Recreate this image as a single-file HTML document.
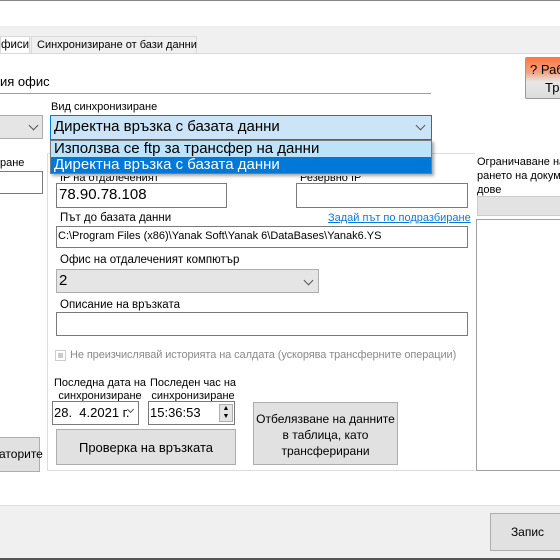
<!DOCTYPE html>
<html><head><meta charset="utf-8"><style>
*{box-sizing:border-box;margin:0;padding:0}
body{width:560px;height:560px;overflow:hidden;background:#fff;position:relative;font-family:"Liberation Sans","Noto Sans CJK JP",sans-serif;font-size:12px;color:#000}
.a{position:absolute;white-space:nowrap}
.tb{position:absolute;background:#fff;border:1px solid #7a7a7a}
.btn{position:absolute;background:#e1e1e1;border:1px solid #adadad;text-align:center;font-size:13px}
.chev{position:absolute;width:7px;height:7px;border-right:1px solid #555;border-bottom:1px solid #555;transform:rotate(45deg)}
</style></head><body>
<div class="a" style="left:0;top:0;width:560px;height:1px;background:#888"></div>
<div class="a" style="left:0;top:26px;width:560px;height:27px;background:#f0f0f0"></div>
<div class="a" style="left:0;top:53px;width:560px;height:1px;background:#d9d9d9"></div>
<div class="a" style="left:0;top:36px;width:30px;height:17px;background:#fff;border:1px solid #d9d9d9;border-bottom:none;font-size:11.5px;padding-top:2px">фиси</div>
<div class="a" style="left:31px;top:36px;width:166px;height:17px;background:#f0f0f0;border:1px solid #d9d9d9;border-bottom:none;font-size:11px;padding:2px 0 0 5px">Синхронизиране от бази данни</div>

<div class="a" style="left:0;top:74px;font-size:13px">ия офис</div>
<div class="a" style="left:0;top:93px;width:431px;height:1px;background:#a0a0a0"></div>

<div class="a" style="left:525px;top:57px;width:40px;height:42px;border:1px solid #999;border-radius:2px;background:linear-gradient(#ff7a45 0%,#f5a080 35%,#e8e8e8 60%,#dcdcdc 100%)"></div>
<div class="a" style="left:530px;top:62px;font-size:13px">? Раб</div>
<div class="a" style="left:545px;top:80px;font-size:13px">Тр</div>

<div class="a" style="left:-2px;top:115px;width:45px;height:24px;background:#e5e5e5;border:1px solid #adadad"></div>
<div class="chev" style="left:30px;top:122px"></div>
<div class="a" style="left:0;top:157px;font-size:11px">ране</div>
<div class="tb" style="left:-2px;top:171px;width:45px;height:23px"></div>
<div class="btn" style="left:-2px;top:437px;width:42px;height:35px;padding-top:9px;font-size:12px">аторите</div>

<div class="a" style="left:47px;top:153px;width:428px;height:318px;border:1px solid #dcdcdc;border-right:none"></div>

<div class="a" style="left:51px;top:101px;font-size:11px">Вид синхронизиране</div>
<div class="a" style="left:50px;top:115px;width:382px;height:25px;background:#cce4f7;border:1px solid #0078d7"></div>
<div class="a" style="left:54px;top:118px;font-size:15px">Директна връзка с базата данни</div>
<div class="chev" style="left:417px;top:122px"></div>
<div class="a" style="left:50px;top:140px;width:382px;height:34px;border:1px solid #7a7a7a;background:#fff;box-shadow:2px 2px 3px rgba(0,0,0,.35)"></div>
<div class="a" style="left:51px;top:141px;width:380px;height:16px;background:#bde3fb"></div>
<div class="a" style="left:51px;top:157px;width:380px;height:16px;background:#0078d7"></div>
<div class="a" style="left:54px;top:140px;font-size:15px">Използва се ftp за трансфер на данни</div>
<div class="a" style="left:54px;top:156px;font-size:15px;color:#fff">Директна връзка с базата данни</div>

<div class="a" style="left:60px;top:172px;font-size:11px;clip-path:inset(4px 0 0 0)">IP на отдалеченият</div>
<div class="tb" style="left:56px;top:183px;width:171px;height:25px"></div>
<div class="a" style="left:59px;top:186px;font-size:15px">78.90.78.108</div>
<div class="a" style="left:300px;top:172px;font-size:11px;clip-path:inset(4px 0 0 0)">Резервно IP</div>
<div class="tb" style="left:296px;top:183px;width:172px;height:25px"></div>

<div class="a" style="left:60px;top:212px;font-size:11.5px">Път до базата данни</div>
<div class="a" style="left:328px;top:212px;font-size:11px;color:#0a7ad8;text-decoration:underline">Задай път по подразбиране</div>
<div class="tb" style="left:56px;top:226px;width:412px;height:22px"></div>
<div class="a" style="left:58px;top:230px;font-size:11px">C:\Program Files (x86)\Yanak Soft\Yanak 6\DataBases\Yanak6.YS</div>

<div class="a" style="left:60px;top:254px;font-size:11.5px">Офис на отдалеченият компютър</div>
<div class="a" style="left:56px;top:269px;width:263px;height:24px;background:#e5e5e5;border:1px solid #adadad"></div>
<div class="a" style="left:59px;top:272px;font-size:15px">2</div>
<div class="chev" style="left:305px;top:277px"></div>

<div class="a" style="left:60px;top:299px;font-size:11.5px">Описание на връзката</div>
<div class="tb" style="left:56px;top:312px;width:412px;height:24px"></div>

<div class="a" style="left:55px;top:350px;width:11px;height:11px;border:1px solid #ccc;background:#fff"><div style="margin:2px;width:5px;height:5px;background:#ccc"></div></div>
<div class="a" style="left:70px;top:349px;font-size:11px;color:#8a8a8a;letter-spacing:-0.1px">Не преизчислявай историята на салдата (ускорява трансферните операции)</div>

<div class="a" style="left:52px;top:377px;width:96px;text-align:center;font-size:11px;line-height:13px">Последна дата на<br>синхронизиране</div>
<div class="a" style="left:148px;top:377px;width:90px;text-align:center;font-size:11px;line-height:13px">Последен час на<br>синхронизиране</div>
<div class="tb" style="left:52px;top:401px;width:87px;height:24px"></div>
<div class="a" style="left:54px;top:405px;font-size:13px">28.&nbsp; 4.2021 г.</div>
<div class="chev" style="left:128px;top:407px;width:5px;height:5px;background:#fff"></div>
<div class="tb" style="left:148px;top:401px;width:87px;height:24px"></div>
<div class="a" style="left:150px;top:405px;font-size:13px">15:36:53</div>
<div class="a" style="left:219px;top:404px;width:14px;height:18px;border:1px solid #adadad;background:#e5e5e5;font-size:7px;line-height:8px;text-align:center">▲<br>▼</div>

<div class="btn" style="left:56px;top:429px;width:180px;height:36px;padding-top:10px">Проверка на връзката</div>
<div class="btn" style="left:253px;top:402px;width:145px;height:63px;padding-top:8px;line-height:16px;font-size:12px">Отбелязване на данните<br>в таблица, като<br>трансферирани</div>

<div class="a" style="left:477px;top:155px;font-size:11px;line-height:14px">Ограничаване на<br>рането на докум<br>дове</div>
<div class="a" style="left:477px;top:196px;width:90px;height:20px;background:#e3e3e3;border:1px solid #ccc"></div>
<div class="a" style="left:476px;top:219px;width:90px;height:252px;border:1px solid #a0a0a0;background:#fff"></div>

<div class="a" style="left:0;top:505px;width:560px;height:1px;background:#ddd"></div>
<div class="a" style="left:0;top:506px;width:560px;height:52px;background:#f0f0f0"></div>
<div class="btn" style="left:490px;top:513px;width:75px;height:38px;padding-top:11px;font-size:12px">Запис</div>
<div class="a" style="left:0;top:558px;width:560px;height:2px;background:#555"></div>
</body></html>
